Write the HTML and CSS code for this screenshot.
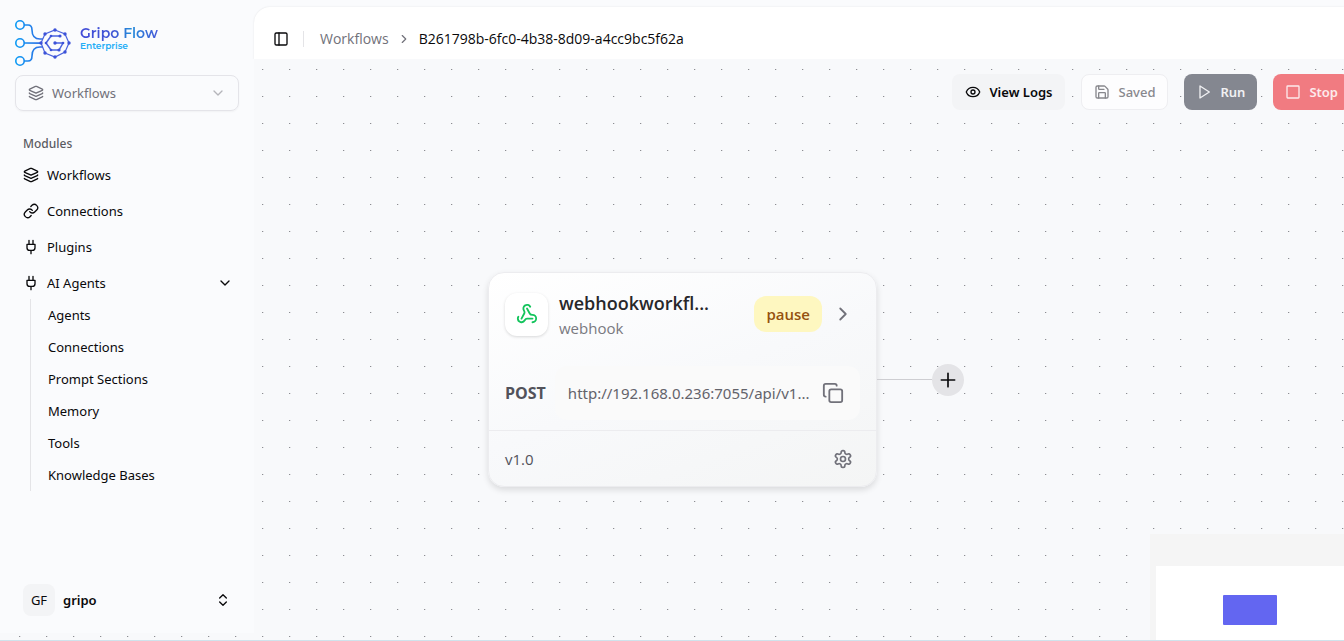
FILE: index.html
```
<!DOCTYPE html>
<html lang="en">
<head>
<meta charset="utf-8">
<title>Gripo Flow</title>
<link rel="stylesheet" href="styles.css">
</head>
<body>
<svg class="defs" aria-hidden="true">
  <symbol id="layers" viewBox="0 0 24 24"><path d="M12.83 2.18a2 2 0 0 0-1.66 0L2.6 6.08a1 1 0 0 0 0 1.83l8.58 3.91a2 2 0 0 0 1.66 0l8.58-3.9a1 1 0 0 0 0-1.83z"/><path d="M2 12a1 1 0 0 0 .58.91l8.6 3.91a2 2 0 0 0 1.65 0l8.58-3.9A1 1 0 0 0 22 12"/><path d="M2 17a1 1 0 0 0 .58.91l8.6 3.91a2 2 0 0 0 1.65 0l8.58-3.9A1 1 0 0 0 22 17"/></symbol>
  <symbol id="plug" viewBox="0 0 24 24"><path d="M12 22v-5M9 8V2M15 8V2M18 8v5a4 4 0 0 1-4 4h-4a4 4 0 0 1-4-4V8Z"/></symbol>
  <symbol id="down" viewBox="0 0 24 24"><path d="m6 9 6 6 6-6"/></symbol>
  <symbol id="right" viewBox="0 0 24 24"><path d="m9 18 6-6-6-6"/></symbol>
</svg>
<div class="app">
  <aside class="sidebar">
    <a class="brand" href="#">
      <svg class="brand-mark" viewBox="0 0 58 48" aria-hidden="true">
        <defs>
          <linearGradient id="wire" gradientUnits="userSpaceOnUse" x1="0" y1="0" x2="44" y2="0"><stop offset="0" stop-color="#0a9cf5"/><stop offset="1" stop-color="#4850d8"/></linearGradient>
        </defs>
        <g fill="none" stroke="url(#wire)" stroke-width="1.6">
          <circle cx="5" cy="6" r="4.200"/><circle cx="5" cy="24" r="4.200"/><circle cx="5" cy="42" r="4.200"/>
          <path d="M9 6h4q4 0 4 5c0 6 3 9 8 9h3M9 24l18 .1M9 42h4q4 0 4-5c0-6 3-9 8-9h3"/>
        </g>
        <g fill="none" stroke="#4a63df">
          <path stroke-width="1.2" d="m40 11 10 4 4 9-4 9-10 5-10-4-4-10 4-9Z"/>
          <path stroke-width="1.5" d="M45 17h-9l-5 7 5 7h8l4-7h-8"/>
        </g>
        <g fill="#3c52d8">
          <circle cx="40" cy="11" r="1.700"/><circle cx="50" cy="15" r="1.700"/><circle cx="54" cy="24" r="1.700"/><circle cx="50" cy="33" r="1.700"/><circle cx="40" cy="38" r="1.700"/><circle cx="30" cy="34" r="1.700"/><circle cx="26" cy="24" r="1.700"/><circle cx="30" cy="15" r="1.700"/>
          <circle cx="45" cy="17" r="1.600"/><circle cx="36" cy="17" r="1.300"/><circle cx="31" cy="24" r="1.300"/><circle cx="36" cy="31" r="1.300"/><circle cx="44" cy="31" r="1.600"/><circle cx="48" cy="24" r="1.300"/><circle cx="40" cy="24" r="1.700"/>
        </g>
      </svg>
      <span class="brand-text"><span class="brand-name">Gripo Flow</span><span class="brand-tier">Enterprise</span></span>
    </a>
    <button class="switcher" type="button"><svg class="icon"><use href="#layers"/></svg><span>Workflows</span><svg class="icon push faint"><use href="#down"/></svg></button>
    <nav class="nav" aria-labelledby="modules">
      <div class="nav-title" id="modules">Modules</div>
      <a class="nav-item" href="#"><svg class="icon"><use href="#layers"/></svg>Workflows</a>
      <a class="nav-item" href="#"><svg class="icon" viewBox="0 0 24 24"><path d="M10 13a5 5 0 0 0 7.54.54l3-3a5 5 0 0 0-7.07-7.07l-1.72 1.71"/><path d="M14 11a5 5 0 0 0-7.54-.54l-3 3a5 5 0 0 0 7.07 7.07l1.71-1.71"/></svg>Connections</a>
      <a class="nav-item" href="#"><svg class="icon"><use href="#plug"/></svg>Plugins</a>
      <button class="nav-item" type="button" aria-expanded="true"><svg class="icon"><use href="#plug"/></svg>AI Agents<svg class="icon push"><use href="#down"/></svg></button>
      <div class="subnav">
        <a href="#">Agents</a><a href="#">Connections</a><a href="#">Prompt Sections</a><a href="#">Memory</a><a href="#">Tools</a><a href="#">Knowledge Bases</a>
      </div>
    </nav>
    <button class="account" type="button"><span class="avatar">GF</span><span class="account-name">gripo</span><svg class="icon push" viewBox="0 0 24 24"><path d="m7 15 5 5 5-5M7 9l5-5 5 5"/></svg></button>
  </aside>
  <main class="main">
    <header class="header">
      <div class="topbar">
        <button class="panel-toggle" type="button" aria-label="Toggle sidebar"><svg class="icon" viewBox="0 0 24 24"><rect x="3" y="3" width="18" height="18" rx="2"/><path d="M9 3v18"/></svg></button>
        <span class="divider"></span>
        <nav class="crumbs" aria-label="Breadcrumb"><a href="#">Workflows</a><svg class="icon small"><use href="#right"/></svg><span class="current">B261798b-6fc0-4b38-8d09-a4cc9bc5f62a</span></nav>
      </div>
    </header>
    <section class="canvas">
      <div class="toolbar">
        <button class="btn logs" type="button"><svg class="icon" viewBox="0 0 24 24"><path d="M2.06 12.35a1 1 0 0 1 0-.7 10.75 10.75 0 0 1 19.88 0 1 1 0 0 1 0 .7 10.75 10.75 0 0 1-19.88 0"/><circle cx="12" cy="12" r="3"/></svg>View Logs</button>
        <button class="btn saved" type="button"><svg class="icon" viewBox="0 0 24 24"><path d="M15.2 3a2 2 0 0 1 1.4.6l3.8 3.8a2 2 0 0 1 .6 1.4V19a2 2 0 0 1-2 2H5a2 2 0 0 1-2-2V5a2 2 0 0 1 2-2z"/><path d="M17 21v-7a1 1 0 0 0-1-1H8a1 1 0 0 0-1 1v7M7 3v4a1 1 0 0 0 1 1h7"/></svg>Saved</button>
        <button class="btn run" type="button"><svg class="icon" viewBox="0 0 24 24"><path d="m6 3 14 9-14 9Z"/></svg>Run</button>
        <button class="btn stop" type="button"><svg class="icon" viewBox="0 0 24 24"><rect x="3" y="3" width="18" height="18" rx="1"/></svg>Stop</button>
      </div>
      <div class="flow">
        <article class="node">
          <div class="node-head">
            <span class="node-icon"><svg class="icon" viewBox="0 0 24 24"><path d="M18 16.98h-5.99c-1.1 0-1.95.94-2.48 1.9A4 4 0 0 1 2 17c.01-.7.2-1.4.57-2"/><path d="m6 17 3.13-5.78c.53-.97.1-2.18-.5-3.1a4 4 0 1 1 6.89-4.06"/><path d="m12 6 3.13 5.73C15.66 12.7 16.9 13 18 13a4 4 0 0 1 0 8"/></svg></span>
            <div class="node-title"><h2>webhookworkfl...</h2><p>webhook</p></div>
            <span class="badge">pause</span>
            <button class="plain" type="button" aria-label="Open"><svg class="icon chevron"><use href="#right"/></svg></button>
          </div>
          <div class="node-body">
            <strong>POST</strong>
            <div class="url"><span>http://192.168.0.236:7055/api/v1...</span><button class="plain" type="button" aria-label="Copy"><svg class="icon copy" viewBox="0 0 24 24"><rect x="8" y="8" width="14" height="14" rx="2"/><path d="M4 16c-1.100 0-2-.9-2-2V4c0-1.100.9-2 2-2h10c1.100 0 2 .9 2 2"/></svg></button></div>
          </div>
          <div class="node-foot"><span>v1.0</span><button class="plain" type="button" aria-label="Settings"><svg class="icon large" viewBox="0 0 24 24"><path d="M12.22 2h-.44a2 2 0 0 0-2 2v.18a2 2 0 0 1-1 1.73l-.43.25a2 2 0 0 1-2 0l-.15-.08a2 2 0 0 0-2.73.73l-.22.38a2 2 0 0 0 .73 2.73l.15.1a2 2 0 0 1 1 1.72v.51a2 2 0 0 1-1 1.74l-.15.09a2 2 0 0 0-.73 2.73l.22.38a2 2 0 0 0 2.73.73l.15-.08a2 2 0 0 1 2 0l.43.25a2 2 0 0 1 1 1.73V20a2 2 0 0 0 2 2h.44a2 2 0 0 0 2-2v-.18a2 2 0 0 1 1-1.73l.43-.25a2 2 0 0 1 2 0l.15.08a2 2 0 0 0 2.73-.73l.22-.39a2 2 0 0 0-.73-2.73l-.15-.08a2 2 0 0 1-1-1.74v-.5a2 2 0 0 1 1-1.74l.15-.09a2 2 0 0 0 .73-2.73l-.22-.38a2 2 0 0 0-2.73-.73l-.15.08a2 2 0 0 1-2 0l-.43-.25a2 2 0 0 1-1-1.73V4a2 2 0 0 0-2-2z"/><circle cx="12" cy="12" r="3"/></svg></button></div>
        </article>
        <span class="edge"></span>
        <button class="add" type="button" aria-label="Add step"><svg class="icon large" viewBox="0 0 24 24"><path d="M4 12h16M12 4v16"/></svg></button>
      </div>
      <div class="minimap"><div class="minimap-view"><span class="minimap-node"></span></div></div>
    </section>
  </main>
</div>
</body>
</html>
```
FILE: styles.css
```
* { box-sizing: border-box; }
body {
  margin: 0;
  font: 14px/20px "Open Sans", "Noto Sans", sans-serif;
  color: #09090b;
  background: #f8f9fb;
}
button { font: inherit; color: inherit; border: 0; background: none; padding: 0; text-align: left; }
a { color: inherit; text-decoration: none; }
h2, p { margin: 0; }
.defs { position: absolute; width: 0; height: 0; }
.icon { width: 16px; height: 16px; flex: none; fill: none; stroke: currentColor; stroke-width: 2; stroke-linecap: round; stroke-linejoin: round; }
.small { width: 14px; height: 14px; }
.large { width: 20px; height: 20px; }
.push { margin-left: auto; }
.faint { opacity: .5; }

.app {
  display: flex;
  min-height: 100vh;
  overflow: hidden;
  border-bottom: 1px solid #cfe3ec;
  background: radial-gradient(2px 1px at 0 0, #8c8d92 60%, transparent) 19px 15px / 27px 27px;
}
.sidebar {
  width: 254px;
  flex: none;
  display: flex;
  flex-direction: column;
  margin-bottom: 7px;
  padding: 19px 15px 17px;
  font-family: "Noto Sans", "Open Sans", sans-serif;
  font-size: 13px;
  background: #fafbfd;
}
.brand { display: flex; gap: 7px; height: 48px; }
.brand-mark { width: 58px; height: 48px; }
.brand-text { display: flex; flex-direction: column; padding-top: 6px; font-family: Montserrat, Inter, sans-serif; }
.brand-name { font-size: 14px; line-height: 17px; font-weight: 600; color: transparent; background: linear-gradient(90deg, #424bd8, #4057d4 45%, #238cd9 65%, #4557d8); background-clip: text; }
.brand-tier { font-size: 9px; line-height: 8px; font-weight: 600; color: #24aef7; }
.switcher {
  display: flex; align-items: center; gap: 8px;
  height: 36px; margin-top: 8px; padding: 0 12px;
  color: #71717a; border: 1px solid #e4e4e9; border-radius: 8px;
  box-shadow: 0 1px 2px #0000000a;
}
.nav { padding: 17px 0 0; }
.nav-title { height: 32px; padding: 0 8px; font-size: 12px; line-height: 32px; font-weight: 500; color: #5b5b62; }
.nav-item { display: flex; align-items: center; gap: 8px; width: 100%; height: 32px; margin-bottom: 4px; padding: 0 6px 0 8px; }
.nav-title + .nav-item { margin-top: -1px; }
.subnav { display: flex; flex-direction: column; gap: 4px; margin: -4px 0 0 15px; padding: 2px 0 2px 17px; border-left: 1px solid #e4e4e7; }
.subnav a { line-height: 28px; }
.account { display: flex; align-items: center; gap: 8px; margin-top: auto; padding: 0 8px; }
.avatar { width: 32px; height: 32px; border-radius: 8px; background: #f3f4f6; line-height: 32px; text-align: center; }
.account-name { font-weight: 600; }

.main { flex: 1; min-width: 0; display: flex; flex-direction: column; }
.header { padding-top: 7px; background: #fafbfd; }
.topbar { display: flex; align-items: center; height: 52px; padding: 12px 19px 0; background: #fff; border-radius: 16px 0 0; box-shadow: 0 0 2px #0000001a; clip-path: inset(-2px 0 0 -2px); }
.panel-toggle { display: flex; }
.divider { width: 1px; height: 16px; margin: 0 16px 0 14px; background: #e4e4e7; }
.crumbs { display: flex; align-items: center; gap: 8px; color: #71717a; }
.current { color: #09090b; }

.canvas { position: relative; flex: 1; overflow: hidden; }
.toolbar { display: flex; justify-content: flex-end; gap: 16px; margin: 15px -6px 0 0; font-family: "Noto Sans", "Open Sans", sans-serif; font-size: 13px; }
.btn { display: flex; align-items: center; gap: 8px; height: 36px; padding: 0 12px; border-radius: 8px; font-weight: 600; white-space: nowrap; flex: none; }
.logs { padding: 0 13px; background: #f3f4f6; }
.saved { background: #fdfdfe; color: #88888d; border: 1px solid #eeeef1; font-weight: 500; }
.run { background: #848790; color: #f1f1f3; }
.stop { background: #f17b81; color: #fdebec; }

.flow { position: absolute; left: 234px; top: 213px; display: flex; align-items: center; }
.node {
  width: 389px; border: 1px solid #ececef; border-radius: 16px; overflow: hidden;
  font-size: 16px; line-height: 24px; color: #52525b;
  background: linear-gradient(160deg, #fff, #f8f9fb 50%, #f4f5f5);
  box-shadow: 0 3px 6px #0000001f;
}
.node-head { display: flex; align-items: center; height: 82px; padding: 0 22px 0 16px; }
.node-icon { display: grid; place-items: center; width: 43px; height: 43px; margin-right: 11px; border-radius: 12px; background: #fff; box-shadow: 0 1px 3px #00000026; color: #13c45c; }
.node-icon .icon { width: 22px; height: 22px; }
.node-title { flex: 1; min-width: 0; padding-top: 2px; }
.node-title h2 { font-size: 18px; line-height: 26px; font-weight: 600; color: #27272a; white-space: nowrap; }
.node-title p { font-size: 15px; color: #797980; }
.badge { padding: 6px 12px; border-radius: 12px; background: #fef7c0; color: #95510f; font-size: 15px; font-weight: 600; }
.plain { display: flex; color: #71717a; }
.chevron { width: 22px; height: 22px; }
.badge + .plain { margin-left: 10px; }
.node-body { display: flex; align-items: center; gap: 9px; height: 75px; padding: 0 16px; }
.node-body strong { font-weight: 700; }
.url { display: flex; align-items: center; justify-content: space-between; flex: 1; gap: 8px; height: 54px; padding: 0 16px 0 13px; border-radius: 12px; background: #fafafa; }
.url span { font-family: "Noto Sans", "Open Sans", sans-serif; font-size: 15px; white-space: nowrap; color: #63636b; }
.copy { width: 22px; height: 22px; }
.node-foot { display: flex; align-items: center; justify-content: space-between; height: 56px; padding: 0 23px 0 16px; border-top: 1px solid #ececef; }
.node-foot span { font-size: 15px; }
.edge { width: 55px; height: 1px; background: #ceced2; }
.add { display: grid; place-items: center; width: 32px; height: 32px; border-radius: 50%; background: #e4e4e7; }

.minimap { position: absolute; right: 0; bottom: 0; width: 194px; height: 106px; padding: 32px 0 0 6px; background: #f5f5f5; }
.minimap-view { height: 100%; padding: 29px 67px; background: #fff; }
.minimap-node { display: block; width: 54px; height: 30px; border-radius: 1px; background: #6366f1; }
```
